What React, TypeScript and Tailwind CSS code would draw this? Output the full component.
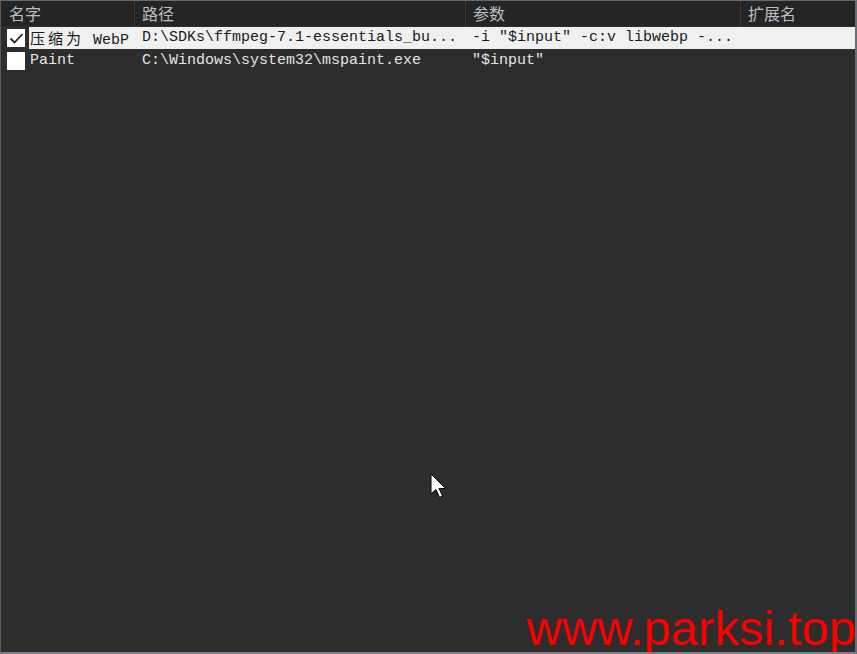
import React from "react";

const mono = { fontFamily: '"Liberation Mono", "Noto Sans CJK SC", monospace' };

function Cjk({ children }: { children: React.ReactNode }) {
  return (
    <span className="tracking-[3px]" style={{ fontFamily: '"Noto Sans CJK SC", sans-serif' }}>
      {children}
    </span>
  );
}

function Check({ checked }: { checked: boolean }) {
  return (
    <div className="w-[18px] h-[18px] bg-white flex items-center justify-center shrink-0">
      {checked && (
        <svg width="15" height="15" viewBox="0 0 15 15">
          <path d="M1.5 7.5 L5.5 11.5 L13.5 3" fill="none" stroke="#222" strokeWidth="1.8" />
        </svg>
      )}
    </div>
  );
}

export default function App() {
  return (
    <div className="relative w-[857px] h-[654px] overflow-hidden bg-[#2d2d2d] border-l border-t border-b-2 border-r-2 border-l-[#5a5a5a] border-t-[#6a6a6a] border-b-[#7a7f86] border-r-[#6a6e74]">
      {/* header */}
      <div
        className="flex h-[25px] bg-[#252525] text-[#b8c0c8] text-[16px] leading-[25px]"
        style={{ fontFamily: '"Noto Sans CJK SC", sans-serif' }}
      >
        <div className="w-[134px] pl-[8px] border-r border-[#3a3a3a]">名字</div>
        <div className="w-[331px] pl-[7px] border-r border-[#3a3a3a]">路径</div>
        <div className="w-[275px] pl-[7px] border-r border-[#3a3a3a]">参数</div>
        <div className="flex-1 pl-[7px]">扩展名</div>
      </div>
      {/* rows */}
      <div className="text-[15px] leading-[22px] pt-[1px]" style={mono}>
        <div className="flex h-[22px] items-center">
          <div className="w-[28px] pl-[6px] flex items-center">
            <Check checked />
          </div>
          <div className="flex-1 flex h-[22px] bg-[#f0f0f0] text-[#1a1a1a] whitespace-pre">
            <div className="w-[113px] pl-[1px]">
              <Cjk>压缩为</Cjk> WebP
            </div>
            <div className="w-[330px]">D:\SDKs\ffmpeg-7.1-essentials_bu...</div>
            <div className="flex-1">-i ″$input″ -c:v libwebp -...</div>
          </div>
        </div>
        <div className="flex h-[22px] items-center text-[#e4e4e4] whitespace-pre pt-[1px]">
          <div className="w-[28px] pl-[6px] flex items-center">
            <Check checked={false} />
          </div>
          <div className="w-[113px] pl-[1px]">Paint</div>
          <div className="w-[330px]">C:\Windows\system32\mspaint.exe</div>
          <div className="flex-1">″$input″</div>
        </div>
      </div>
      {/* cursor */}
      <svg className="absolute left-[429px] top-[472px]" width="18" height="28" viewBox="0 0 18 28">
        <path d="M1 1 L1 21 L6 16.5 L9.5 24.5 L12.5 23 L9 15.5 L15.5 15.5 Z" fill="#fff" stroke="#000" strokeWidth="1" />
      </svg>
      {/* watermark */}
      <div
        className="absolute left-[526px] top-[599px] text-[#ff0000] text-[49px] leading-[56px] whitespace-nowrap"
        style={{ fontFamily: '"Liberation Sans", Arial, sans-serif' }}
      >
        www.parksi.top
      </div>
    </div>
  );
}
